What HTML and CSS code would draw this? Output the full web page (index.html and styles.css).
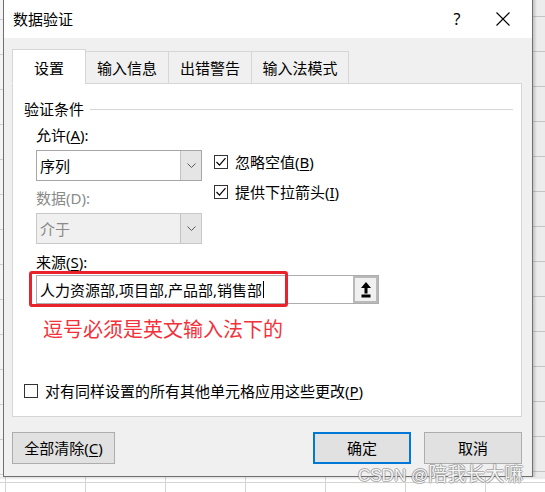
FILE: index.html
```html
<!DOCTYPE html>
<html lang="zh-CN">
<head>
<meta charset="utf-8">
<title>数据验证</title>
<link rel="stylesheet" href="styles.css">
</head>
<body>
<div class="screen">
  <div class="edge-left"></div>
  <div class="dialog">
    <div class="titlebar">
      <span class="title">数据验证</span>
      <span class="help">?</span>
      <span class="close"><svg width="14" height="14" viewBox="0 0 14 14"><path d="M0.5 0.5L13.5 13.5M13.5 0.5L0.5 13.5" stroke="#000" stroke-width="1.1" fill="none"/></svg></span>
    </div>
    <div class="body">
      <div class="tabs">
        <div class="tab active">设置</div>
        <div class="tab w84">输入信息</div>
        <div class="tab w84">出错警告</div>
        <div class="tab w98">输入法模式</div>
      </div>
      <div class="panel">
        <div class="group-title"><span>验证条件</span><span class="rule"></span></div>
        <div class="fields">
          <div class="criteria">
            <div class="col-left">
              <div class="label">允许(<u>A</u>):</div>
              <div class="select"><span class="value">序列</span><span class="drop"><svg width="9" height="5" viewBox="0 0 9 5"><path d="M0.5 0.5L4.5 4.5L8.5 0.5" stroke="#5a5a5a" fill="none"/></svg></span></div>
              <div class="label disabled gap7">数据(D):</div>
              <div class="select disabled"><span class="value">介于</span><span class="drop"><svg width="9" height="5" viewBox="0 0 9 5"><path d="M0.5 0.5L4.5 4.5L8.5 0.5" stroke="#5a5a5a" fill="none"/></svg></span></div>
            </div>
            <div class="col-right">
              <div class="check"><span class="box"><svg width="12" height="12" viewBox="0 0 12 12"><path d="M1.5 6L4.5 9.2L10.5 2.2" stroke="#000" stroke-width="1.2" fill="none"/></svg></span><span>忽略空值(<u>B</u>)</span></div>
              <div class="check"><span class="box"><svg width="12" height="12" viewBox="0 0 12 12"><path d="M1.5 6L4.5 9.2L10.5 2.2" stroke="#000" stroke-width="1.2" fill="none"/></svg></span><span>提供下拉箭头(<u>I</u>)</span></div>
            </div>
          </div>
          <div class="label gap8">来源(<u>S</u>):</div>
          <div class="source">
            <div class="source-input"><span class="text">人力资源部,项目部,产品部,销售部</span><span class="caret"></span></div>
            <div class="pick"><svg width="10" height="16" viewBox="0 0 10 16"><path d="M5 0L10 6H0Z" fill="#000"/><rect x="3.5" y="5.5" width="3" height="6" fill="#000"/><rect x="0.5" y="12.5" width="9" height="3" fill="#000"/></svg></div>
            <div class="highlight"></div>
          </div>
          <div class="note">逗号必须是英文输入法下的</div>
        </div>
        <div class="check apply"><span class="box"></span><span>对有同样设置的所有其他单元格应用这些更改(<u>P</u>)</span></div>
      </div>
      <div class="buttons">
        <button class="btn clear">全部清除(<u>C</u>)</button>
        <span class="spacer"></span>
        <button class="btn primary">确定</button>
        <button class="btn">取消</button>
      </div>
    </div>
  </div>
  <div class="edge-right"></div>
  <div class="sheet-bottom"></div>
  <div class="watermark"><span class="wm-latin">CSDN @</span>陪我长大嘛</div>
</div>
</body>
</html>
```

FILE: styles.css
```css
* { box-sizing: border-box; }
html, body { margin: 0; padding: 0; }
body {
  width: 545px;
  height: 492px;
  overflow: hidden;
  background: #fff;
  font-family: "Noto Sans", "Noto Sans CJK SC", sans-serif;
  font-size: 15px;
  color: #000;
}
u { text-decoration-thickness: 1px; text-underline-offset: 2px; }

.screen {
  position: relative;
  width: 545px;
  height: 492px;
  display: grid;
  grid-template-columns: 3px 530px 12px;
  grid-template-rows: 477px 15px;
}

.edge-left {
  background-color: #f4f4f4;
  background-image: repeating-linear-gradient(to bottom, transparent 0 19px, #cfcfcf 19px 20px, transparent 20px 35px);
}
.edge-right {
  background-color: #ececec;
  background-image:
    linear-gradient(to right, rgba(0,0,0,0.18), rgba(0,0,0,0) 4px),
    repeating-linear-gradient(to bottom, transparent 0 16px, #c4c4c4 16px 17px, transparent 17px 35px);
}
.sheet-bottom {
  grid-column: 1 / -1;
  background-color: #fff;
  background-image:
    linear-gradient(to bottom, rgba(0,0,0,0.12), rgba(0,0,0,0) 3px),
    linear-gradient(to bottom, transparent 5px, #d4d4d4 5px, #d4d4d4 6px, transparent 6px),
    repeating-linear-gradient(to right, transparent 0 5px, #d4d4d4 5px 6px, transparent 6px 80px);
}

.dialog {
  border: 1px solid #707070;
  border-top: 0;
  background: #f0f0f0;
  display: flex;
  flex-direction: column;
  position: relative;
  z-index: 1;
}

.titlebar {
  height: 38px;
  background: #fff;
  display: flex;
  align-items: center;
  padding: 0 6px 0 9px;
}
.title { flex: 1; font-size: 15px; line-height: 20px; }
.help { width: 46px; text-align: center; font-size: 16px; line-height: 20px; }
.close { width: 46px; display: flex; justify-content: center; }
.close svg { display: block; }

.body {
  flex: 1;
  display: flex;
  flex-direction: column;
  padding: 11px 10px 12px 8px;
}

.tabs {
  height: 35px;
  display: flex;
  align-items: flex-end;
  margin-bottom: -1px;
  position: relative;
  z-index: 2;
}
.tab {
  height: 33px;
  width: 74px;
  border: 1px solid #d6d6d6;
  background: #f0f0f0;
  display: flex;
  align-items: center;
  justify-content: center;
  line-height: 20px;
}
.tab + .tab { margin-left: -1px; }
.tab.w84 { width: 84px; }
.tab.w98 { width: 98px; }
.tab.active {
  height: 35px;
  background: #fff;
  border-bottom-color: #fff;
  padding-top: 2px;
}

.panel {
  width: 510px;
  height: 334px;
  background: #fff;
  border: 1px solid #d6d6d6;
  padding: 15px 8px 0 11px;
  display: flex;
  flex-direction: column;
}

.group-title {
  height: 20px;
  line-height: 20px;
  display: flex;
  align-items: center;
}
.rule { flex: 1; height: 1px; background: #d6d6d6; margin-left: 6px; }

.fields { padding-left: 12px; margin-top: 6px; }

.criteria { display: flex; }
.col-left { width: 166px; display: flex; flex-direction: column; }
.col-right {
  margin-left: 12px;
  padding-top: 27px;
  display: flex;
  flex-direction: column;
  gap: 10px;
}

.label { height: 20px; line-height: 20px; }
.label.disabled { color: #8a8a8a; }
.gap7 { margin-top: 7px; }
.gap8 { margin-top: 8px; }

.select {
  margin-top: 5px;
  height: 31px;
  border: 1px solid #a6a6a6;
  background: #fff;
  display: flex;
  align-items: stretch;
}
.select .value { flex: 1; padding-left: 3px; display: flex; align-items: center; }
.select .drop {
  width: 21px;
  background: #e5e5e5;
  border-left: 1px solid #c2c2c2;
  display: flex;
  align-items: center;
  justify-content: center;
}
.select .drop svg { display: block; }
.select.disabled { background: #f0f0f0; border-color: #c8c8c8; color: #8a8a8a; }

.check {
  height: 20px;
  display: flex;
  align-items: center;
  gap: 7px;
  line-height: 20px;
}
.box {
  width: 14px;
  height: 14px;
  border: 1px solid #333;
  background: #fff;
  display: flex;
  align-items: center;
  justify-content: center;
}
.box svg { display: block; }

.source {
  position: relative;
  margin-top: 3px;
  width: 343px;
  height: 29px;
  border: 1px solid #adadad;
  display: flex;
}
.source-input {
  flex: 1;
  display: flex;
  align-items: center;
  padding-left: 3px;
  font-size: 15px;
}
.caret { width: 1px; height: 17px; background: #000; margin-left: 1px; }
.pick {
  width: 25px;
  border: 2px solid #b9b9b9;
  background: #f0f0f0;
  display: flex;
  align-items: center;
  justify-content: center;
}
.pick svg { display: block; }
.highlight {
  position: absolute;
  left: -8px;
  top: -5px;
  width: 259px;
  height: 36px;
  border: 3px solid #e8232b;
  border-radius: 3px;
}

.note {
  margin-top: 12px;
  height: 28px;
  line-height: 28px;
  padding-left: 7px;
  font-size: 20px;
  color: #f2313a;
}

.apply { margin-top: 37px; }

.buttons {
  margin-top: 15px;
  height: 32px;
  display: flex;
}
.btn {
  height: 32px;
  width: 98px;
  padding: 0;
  border: 1px solid #adadad;
  background: #e1e1e1;
  font-family: inherit;
  font-size: 15px;
  color: #000;
  line-height: 20px;
}
.btn.clear { width: 103px; }
.btn.primary { border: 2px solid #0078d7; margin-right: 13px; }
.spacer { flex: 1; }

.watermark {
  position: absolute;
  left: 358px;
  top: 462px;
  z-index: 5;
  font-family: "Noto Sans CJK SC", sans-serif;
  font-size: 19px;
  line-height: 22px;
  color: #f4f4f4;
  text-shadow:
    1px 0 0 rgba(120,120,120,0.55),
    -1px 0 0 rgba(120,120,120,0.55),
    0 1px 0 rgba(120,120,120,0.55),
    0 -1px 0 rgba(120,120,120,0.55);
}
.wm-latin {
  font-family: "Liberation Sans", sans-serif;
  font-size: 17px;
}
```
